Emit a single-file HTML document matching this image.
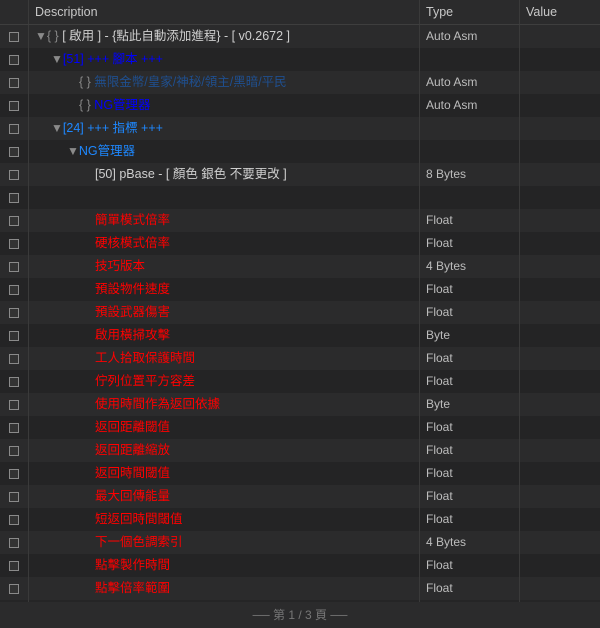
<!DOCTYPE html>
<html><head><meta charset="utf-8"><style>
body{margin:0;width:600px;height:628px;background:#252526;font-family:"Liberation Sans","Noto Sans CJK TC",sans-serif;font-size:12.5px;color:#cfcfcf;overflow:hidden}
.hdr{height:24px;background:#2b2b2c;border-bottom:1px solid #3e3e3e;position:relative;color:#c8c8c8}
.hdr span{position:absolute;top:5px}
.row{height:23px;position:relative;line-height:23px}
.row:nth-child(odd){background:#2b2b2c}
.row:nth-child(even){background:#242425}
.cb{position:absolute;left:9px;top:7px;width:8px;height:8px;border:1px solid #8a8a8a;background:#333}
.d{position:absolute;white-space:nowrap}
.t{position:absolute;left:426px;color:#bdbdbd;font-size:12px}
.v1,.v2,.v3{position:absolute;top:0;bottom:0;width:1px;background:#3a3a3a}
.v1{left:28px}.v2{left:419px}.v3{left:519px}
.red{color:#f00}
.tri{color:#8a8a8a;font-size:12px}
.br{color:#888}
.foot{position:absolute;top:602px;left:0;width:600px;height:26px;background:#2b2b2c;text-align:center;line-height:26px;color:#777;font-size:12px}
</style></head><body>
<div class="hdr"><span style="left:35px">Description</span><span style="left:426px">Type</span><span style="left:526px">Value</span><div class="v1"></div><div class="v2"></div><div class="v3"></div></div>
<div id="rows">
<div class="row"><div class="cb"></div><div class="d" style="left:35px"><span class="tri">▼</span><span class="br">{ }</span> [ 啟用 ] - {點此自動添加進程} - [ v0.2672 ]</div><div class="t">Auto Asm</div></div>
<div class="row"><div class="cb"></div><div class="d" style="left:51px;color:#0000ff"><span class="tri" style="color:#8a8a8a">▼</span>[51] +++ 腳本 +++</div></div>
<div class="row"><div class="cb"></div><div class="d" style="left:79px;color:#1f4f8f"><span class="br">{ }</span> 無限金幣/皇家/神秘/領主/黑暗/平民</div><div class="t">Auto Asm</div></div>
<div class="row"><div class="cb"></div><div class="d" style="left:79px;color:#0000ff"><span class="br">{ }</span> NG管理器</div><div class="t">Auto Asm</div></div>
<div class="row"><div class="cb"></div><div class="d" style="left:51px;color:#1e88ff"><span class="tri">▼</span>[24] +++ 指標 +++</div></div>
<div class="row"><div class="cb"></div><div class="d" style="left:67px;color:#1e88ff"><span class="tri">▼</span>NG管理器</div></div>
<div class="row"><div class="cb"></div><div class="d" style="left:95px">[50] pBase - [ 顏色 銀色 不要更改 ]</div><div class="t">8 Bytes</div></div>
<div class="row"><div class="cb"></div></div>
<div class="row"><div class="cb"></div><div class="d red" style="left:95px">簡單模式倍率</div><div class="t">Float</div></div>
<div class="row"><div class="cb"></div><div class="d red" style="left:95px">硬核模式倍率</div><div class="t">Float</div></div>
<div class="row"><div class="cb"></div><div class="d red" style="left:95px">技巧版本</div><div class="t">4 Bytes</div></div>
<div class="row"><div class="cb"></div><div class="d red" style="left:95px">預設物件速度</div><div class="t">Float</div></div>
<div class="row"><div class="cb"></div><div class="d red" style="left:95px">預設武器傷害</div><div class="t">Float</div></div>
<div class="row"><div class="cb"></div><div class="d red" style="left:95px">啟用橫掃攻擊</div><div class="t">Byte</div></div>
<div class="row"><div class="cb"></div><div class="d red" style="left:95px">工人拾取保護時間</div><div class="t">Float</div></div>
<div class="row"><div class="cb"></div><div class="d red" style="left:95px">佇列位置平方容差</div><div class="t">Float</div></div>
<div class="row"><div class="cb"></div><div class="d red" style="left:95px">使用時間作為返回依據</div><div class="t">Byte</div></div>
<div class="row"><div class="cb"></div><div class="d red" style="left:95px">返回距離閾值</div><div class="t">Float</div></div>
<div class="row"><div class="cb"></div><div class="d red" style="left:95px">返回距離縮放</div><div class="t">Float</div></div>
<div class="row"><div class="cb"></div><div class="d red" style="left:95px">返回時間閾值</div><div class="t">Float</div></div>
<div class="row"><div class="cb"></div><div class="d red" style="left:95px">最大回傳能量</div><div class="t">Float</div></div>
<div class="row"><div class="cb"></div><div class="d red" style="left:95px">短返回時間閾值</div><div class="t">Float</div></div>
<div class="row"><div class="cb"></div><div class="d red" style="left:95px">下一個色調索引</div><div class="t">4 Bytes</div></div>
<div class="row"><div class="cb"></div><div class="d red" style="left:95px">點擊製作時間</div><div class="t">Float</div></div>
<div class="row"><div class="cb"></div><div class="d red" style="left:95px">點擊倍率範圍</div><div class="t">Float</div></div>
</div>
<div style="position:absolute;top:25px;left:0;width:600px;height:577px;pointer-events:none"><div class="v1"></div><div class="v2"></div><div class="v3"></div></div>
<div class="foot">── 第 1 / 3 頁 ──</div>
</body></html>
